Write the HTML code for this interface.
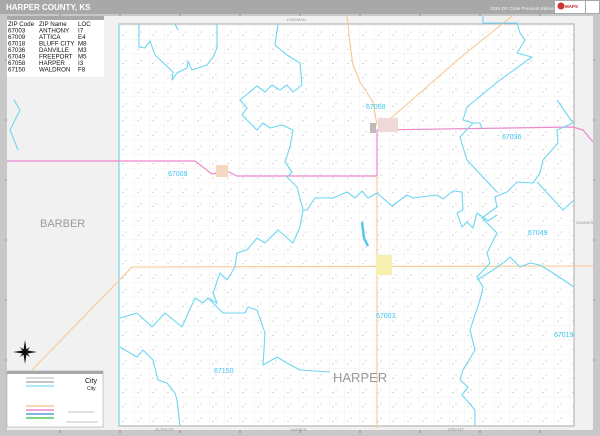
<!DOCTYPE html>
<html><head><meta charset="utf-8"><style>
html,body{margin:0;padding:0;background:#fff;}
body{width:600px;height:436px;overflow:hidden;font-family:"Liberation Sans",sans-serif;position:relative;}
svg{position:absolute;left:0;top:0;}
</style></head><body>
<svg width="600" height="436" viewBox="0 0 600 436" xmlns="http://www.w3.org/2000/svg" font-family="Liberation Sans, sans-serif">
<defs>
<pattern id="g" width="15" height="14.3" patternUnits="userSpaceOnUse" x="119" y="25">
<path d="M0 0H15M0 0V14.3" stroke="#ececec" stroke-width="0.8" fill="none"/>
<path d="M7 6v2M3 10h2" stroke="#bbb" stroke-width="0.6"/>
</pattern>
</defs>
<rect x="0" y="0" width="600" height="14" fill="#a8a8a8"/>
<text x="6" y="10" fill="#fff" font-size="8" font-weight="bold">HARPER COUNTY, KS</text>
<text x="490" y="10" fill="#f4f4f4" font-size="4.5">2026 ZIP Code Premium Edition</text>
<rect x="555" y="1" width="30" height="12" fill="#fff"/>
<circle cx="561" cy="6" r="3.5" fill="#c33"/>
<text x="565" y="8" fill="#c22" font-size="4.5" font-weight="bold">MAPS</text>
<rect x="586" y="1" width="13" height="12" fill="#fff"/>
<rect x="0" y="14" width="600" height="422" fill="#c8c8c8"/>
<rect x="7" y="16" width="586" height="414" fill="#f1f1f1"/>
<g stroke="#666" stroke-width="0.6">
<path d="M60 14v2M120 14v2M180 14v2M240 14v2M300 14v2M360 14v2M420 14v2M480 14v2M540 14v2M60 430v3M120 430v3M180 430v3M240 430v3M300 430v3M360 430v3M420 430v3M480 430v3M540 430v3M5 60h2M5 120h2M5 180h2M5 240h2M5 300h2M5 360h2M593 60h2M593 120h2M593 180h2M593 240h2M593 300h2M593 360h2"/>
</g>
<rect x="119" y="24" width="455" height="402" fill="#fff"/>
<rect x="119" y="24" width="455" height="402" fill="url(#g)"/>
<path d="M119 24H574V426H119Z" fill="none" stroke="#aaa" stroke-width="1"/>
<line x1="119" y1="24" x2="119" y2="426" stroke="#7dd8f0" stroke-width="1.3"/>
<text x="287" y="21" fill="#999" font-size="4">KINGMAN</text>
<text x="155" y="431" fill="#999" font-size="4.5">ALFALFA</text>
<text x="290" y="431" fill="#999" font-size="4">HARPER</text>
<text x="448" y="431" fill="#999" font-size="4.5">GRANT</text>
<text x="576" y="224" fill="#999" font-size="4">SUMNER</text>
<text x="40" y="227" fill="#9a9a9a" font-size="11">BARBER</text>
<g fill="none" stroke-linejoin="round">
<path d="M7 161H195L212 174L227 171L237 176H377V130L573 127L583 130L593 142" stroke="#ee88cc" stroke-width="1.2"/>
<path d="M32 370L132 267L593 266M377 176V428M347 16L350 45L353 65L360 82L373 102L377 125M383 125L460 58L512 16" stroke="#f8c890" stroke-width="1.1"/>
</g>
<g fill="none" stroke="#6dd6f2" stroke-width="1.1" stroke-linejoin="round">
<path d="M139 24V47L145 48L150 41L155 55L173 72L172 80L177 73L187 68L188 61L192 70L207 65L213 57L217 48V24"/>
<path d="M278 24L275 45L287 55L300 63L302 85L293 92L287 85L280 90L272 85L265 92L257 86L240 100L247 108L242 115L257 130L263 123L270 128L282 125L293 130L290 147L285 162L292 172L287 177L297 187L303 210L307 210L315 198L333 198L347 192L355 198L362 191L368 198L377 193L392 206L407 195L413 198L437 195L443 199L453 191L462 192L463 210L457 213L462 227L467 222L473 228L477 213L488 221L497 215"/>
<path d="M483 16V23H517L520 33L525 40L517 53L532 57L500 80L467 107L463 120L473 123L460 137L467 160L497 192"/>
<path d="M473 123L480 123L482 129"/>
<path d="M557 100L573 123L557 130L558 143L543 160L540 173L533 183L517 182L507 192L495 197L497 207L482 218L497 233L487 253L490 263L477 277L483 287L480 300L470 330L475 350L463 370L460 380L468 387L462 395L475 410V426"/>
<path d="M537 182L563 210L574 200"/>
<path d="M477 280L493 270L503 263L510 257L520 267L530 263L540 265L553 273L574 287"/>
<path d="M120 318L137 313L152 327L165 313L182 327L195 298L203 303L208 298L217 303L213 293L220 273L227 280L235 267L237 253L247 250L257 238L265 243L278 230L293 243L300 227L303 210"/>
<path d="M208 298L223 313L245 313L248 307L257 310L265 333L263 365L277 357L287 363L300 370L330 372"/>
<path d="M120 347L137 357L143 350L153 360L158 380L167 383L175 393L177 400L180 426"/>
<path d="M175 24L178 30M14 100L20 110L10 130L18 150"/>
</g>
<rect x="376" y="255" width="16" height="20" fill="#f6f0b0"/>
<rect x="378" y="118" width="20" height="14" fill="#eed8d8"/>
<rect x="370" y="123" width="6" height="10" fill="#bbb"/>
<rect x="216" y="165" width="12" height="12" fill="#f4d8c0"/>
<path d="M362 222L364 238L368 246" stroke="#58c8e8" stroke-width="2.5" fill="none"/>
<g fill="#3cc4ee" font-size="7">
<text x="366" y="109">67058</text>
<text x="502" y="139">67036</text>
<text x="168" y="176">67009</text>
<text x="528" y="235">67049</text>
<text x="376" y="318">67003</text>
<text x="554" y="337">67019</text>
<text x="214" y="373">67150</text>
</g>
<text x="333" y="382" fill="#9a9a9a" font-size="13">HARPER</text>
<g transform="translate(25,352)" fill="#111">
<path d="M0 -12L1.6 -1.6L0 0L-1.6 -1.6Z M0 12L1.6 1.6L0 0L-1.6 1.6Z M-12 0L-1.6 -1.6L0 0L-1.6 1.6Z M12 0L1.6 -1.6L0 0L1.6 1.6Z"/>
<path d="M-5 -5L1 -1L-1 1Z M5 5L-1 1L1 -1Z M5 -5L1 1L-1 -1Z M-5 5L-1 -1L1 1Z"/>
</g>
<rect x="7" y="16" width="97" height="4" fill="#a8a8a8"/>
<rect x="7" y="20" width="97" height="57" fill="#fff"/>
<g font-size="6.2" fill="#111">
<text x="8" y="26">ZIP Code</text><text x="39" y="26">ZIP Name</text><text x="78" y="26">LOC</text>
<text x="8" y="32.5">67003</text><text x="39" y="32.5">ANTHONY</text><text x="78" y="32.5">I7</text>
<text x="8" y="39">67009</text><text x="39" y="39">ATTICA</text><text x="78" y="39">E4</text>
<text x="8" y="45.5">67018</text><text x="39" y="45.5">BLUFF CITY</text><text x="78" y="45.5">M8</text>
<text x="8" y="52">67036</text><text x="39" y="52">DANVILLE</text><text x="78" y="52">M3</text>
<text x="8" y="58.5">67049</text><text x="39" y="58.5">FREEPORT</text><text x="78" y="58.5">M5</text>
<text x="8" y="65">67058</text><text x="39" y="65">HARPER</text><text x="78" y="65">I3</text>
<text x="8" y="71.5">67150</text><text x="39" y="71.5">WALDRON</text><text x="78" y="71.5">F8</text>
</g>
<rect x="7" y="371" width="96" height="56" fill="#fff" stroke="#999" stroke-width="0.5"/>
<rect x="7" y="371" width="96" height="3" fill="#a8a8a8"/>
<g stroke-width="1">
<line x1="26" y1="378" x2="54" y2="378" stroke="#bbb"/>
<line x1="26" y1="382" x2="54" y2="382" stroke="#888"/>
<line x1="26" y1="386" x2="54" y2="386" stroke="#8ee4f6" stroke-width="1.5"/>
<line x1="26" y1="406" x2="54" y2="406" stroke="#f8c890" stroke-width="1.5"/>
<line x1="26" y1="410" x2="54" y2="410" stroke="#ee88cc" stroke-width="1.5"/>
<line x1="26" y1="414" x2="54" y2="414" stroke="#5a9ad8" stroke-width="1.5"/>
<line x1="26" y1="418" x2="54" y2="418" stroke="#55cc55" stroke-width="1.5"/>
<line x1="66" y1="422" x2="98" y2="422" stroke="#888" stroke-width="0.6"/>
<line x1="68" y1="412" x2="94" y2="412" stroke="#888" stroke-width="0.6"/>
</g>
<text x="85" y="383" font-size="7" fill="#111">City</text>
<text x="87" y="390" font-size="5" fill="#111">City</text>
</svg>
</body></html>
